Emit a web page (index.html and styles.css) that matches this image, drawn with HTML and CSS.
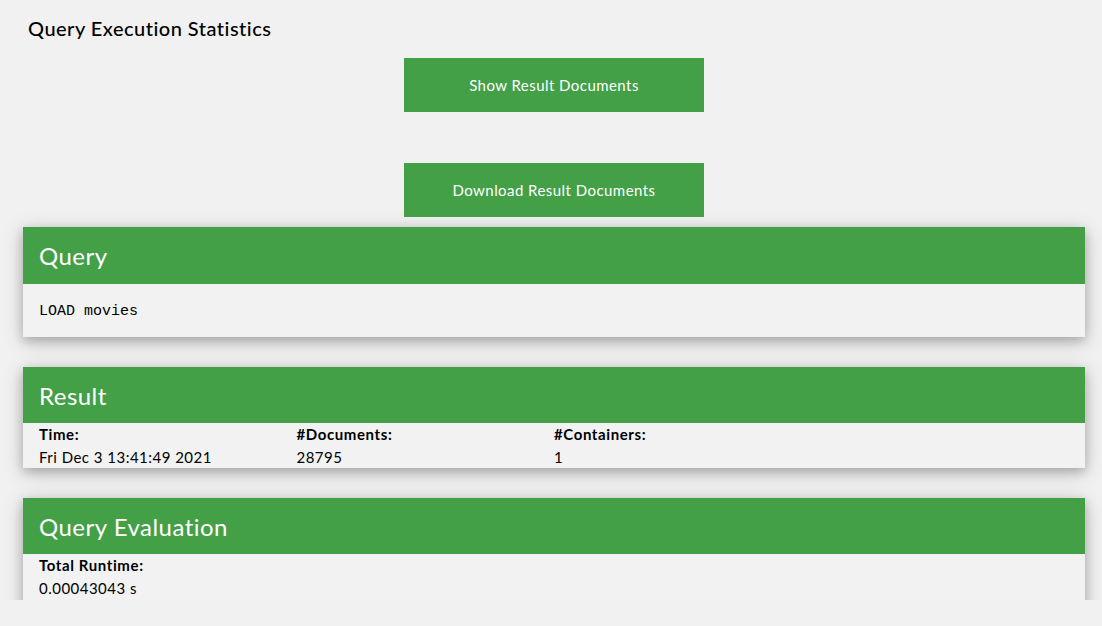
FILE: index.html
```html
<!DOCTYPE html>
<html>
<head>
<meta charset="utf-8">
<title>Query Execution Statistics</title>
<link rel="stylesheet" href="styles.css">
</head>
<body>
<div class="page">
  <h1 class="title">Query Execution Statistics</h1>
  <div class="actions">
    <button class="btn">Show Result Documents</button>
    <button class="btn">Download Result Documents</button>
  </div>
  <section class="card card-query">
    <header class="card-head">Query</header>
    <div class="card-body query-body"><code>LOAD movies</code></div>
  </section>
  <section class="card">
    <header class="card-head">Result</header>
    <div class="card-body grid4">
      <div class="cell"><div class="label">Time:</div><div class="value">Fri Dec 3 13:41:49 2021</div></div>
      <div class="cell"><div class="label">#Documents:</div><div class="value">28795</div></div>
      <div class="cell"><div class="label">#Containers:</div><div class="value">1</div></div>
    </div>
  </section>
  <section class="card">
    <header class="card-head">Query Evaluation</header>
    <div class="card-body eval-body">
      <div class="label">Total Runtime:</div>
      <div class="value">0.00043043 s</div>
    </div>
  </section>
</div>
</body>
</html>
```
FILE: styles.css
```css
html, body {
  margin: 0;
  background: #f1f1f1;
}
body {
  font-family: Lato, "Open Sans", sans-serif;
  color: #000;
  letter-spacing: 0.03em;
}
.page {
  height: 600px;
  overflow: hidden;
  padding: 0 17px 0 23px;
}
.title {
  margin: 0;
  padding: 13px 0 0 5px;
  font-size: 20px;
  line-height: 30px;
  font-weight: 500;
}
.actions {
  display: flex;
  flex-direction: column;
  align-items: center;
  gap: 51px;
  margin-top: 15px;
}
.btn {
  width: 300px;
  height: 54px;
  border: none;
  background: #43a047;
  color: #fff;
  font-family: inherit;
  font-size: 15px;
  letter-spacing: 0.03em;
  padding: 0;
  cursor: pointer;
}
.card {
  background: #f2f2f2;
  box-shadow: 0 4px 10px 0 rgba(0,0,0,0.2), 0 4px 20px 0 rgba(0,0,0,0.19);
  margin-top: 30px;
}
.actions + .card {
  margin-top: 10px;
}
.card-head {
  background: #43a047;
  color: #fff;
  height: 56px;
  padding: 0 16px;
  display: flex;
  align-items: center;
  font-size: 24px;
  font-weight: 400;
  letter-spacing: 0.02em;
}
.card-query .card-head {
  height: 57px;
}
.card-body {
  padding: 0 16px;
  font-size: 15px;
  line-height: 22.5px;
}
.query-body {
  height: 53px;
  display: flex;
  align-items: center;
  box-sizing: border-box;
  padding-top: 3px;
}
.query-body code {
  font-family: "Courier New", "Liberation Mono", monospace;
  font-size: 15px;
  letter-spacing: 0;
}
.eval-body {
  padding-bottom: 20px;
}
.grid4 {
  display: grid;
  grid-template-columns: repeat(4, 1fr);
}
.label {
  font-weight: 700;
  letter-spacing: 0.04em;
}
```
